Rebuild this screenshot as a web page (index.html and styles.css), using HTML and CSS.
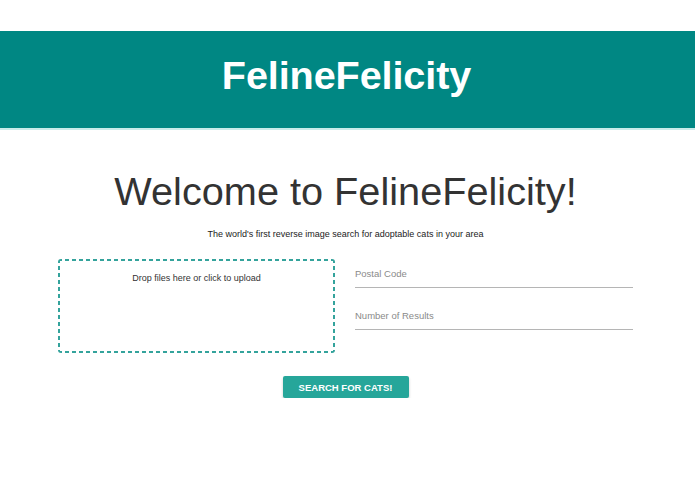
FILE: index.html
```html
<!DOCTYPE html>
<html>
<head>
<meta charset="utf-8">
<link rel="stylesheet" href="styles.css">
</head>
<body>
<header class="topbar">
  <h1 class="brand">FelineFelicity</h1>
</header>
<main class="content">
  <h2 class="welcome">Welcome to FelineFelicity!</h2>
  <p class="tagline">The world's first reverse image search for adoptable cats in your area</p>
  <div class="form-row">
    <div class="dropzone">Drop files here or click to upload</div>
    <div class="fields">
      <div class="field"><span class="label">Postal Code</span></div>
      <div class="field"><span class="label">Number of Results</span></div>
    </div>
  </div>
  <div class="actions">
    <button class="search-btn">SEARCH FOR CATS!</button>
  </div>
</main>
</body>
</html>
```
FILE: styles.css
```css
html, body {
  margin: 0;
  padding: 0;
  background: #fff;
  font-family: "Liberation Sans", Arial, sans-serif;
}
.topbar {
  margin-top: 31px;
  height: 97px;
  background: #008783;
  border-bottom: 2px solid #c9ecea;
  display: flex;
  align-items: center;
  justify-content: center;
}
.brand {
  margin: 0;
  color: #fff;
  font-size: 39.6px;
  font-weight: bold;
  letter-spacing: -0.1px;
  position: relative;
  top: -4px;
  left: -1px;
}
.content {
  padding: 0 62px 0 58px;
}
.welcome {
  margin: 37px 0 0;
  text-align: center;
  font-weight: normal;
  font-size: 39.7px;
  line-height: 48px;
  color: #333;
}
.tagline {
  margin: 13px 0 0;
  text-align: center;
  font-size: 9px;
  line-height: 12px;
  color: #222;
}
.form-row {
  margin-top: 19px;
  display: grid;
  grid-template-columns: 277px 1fr;
  gap: 20px;
}
.dropzone {
  box-sizing: border-box;
  height: 94px;
  border-radius: 3px;
  background-image:
    repeating-linear-gradient(90deg, #34a39c 0 4px, transparent 4px 7px),
    repeating-linear-gradient(90deg, #34a39c 0 4px, transparent 4px 7px),
    repeating-linear-gradient(180deg, #34a39c 0 4px, transparent 4px 7px),
    repeating-linear-gradient(180deg, #34a39c 0 4px, transparent 4px 7px);
  background-size: 100% 2px, 100% 2px, 2px 100%, 2px 100%;
  background-position: 0 0, 0 100%, 0 0, 100% 0;
  background-repeat: no-repeat;
  text-align: center;
  font-size: 9px;
  color: #333;
  padding-top: 14px;
}
.fields {
  display: flex;
  flex-direction: column;
  gap: 13px;
}
.field {
  height: 29px;
  border-bottom: 1px solid #b5b5b5;
  box-sizing: border-box;
  padding-top: 7px;
  line-height: 12px;
}
.label {
  font-size: 9.5px;
  color: #8a8a8a;
}
.actions {
  margin-top: 23px;
  display: flex;
  justify-content: center;
}
.search-btn {
  width: 126px;
  height: 22px;
  border: none;
  border-radius: 2px;
  background: #26a69a;
  color: #fff;
  font-family: "Liberation Sans", Arial, sans-serif;
  font-size: 9.5px;
  font-weight: bold;
  box-shadow: 0 2px 3px rgba(0,0,0,0.2);
  padding: 0;
}
```
